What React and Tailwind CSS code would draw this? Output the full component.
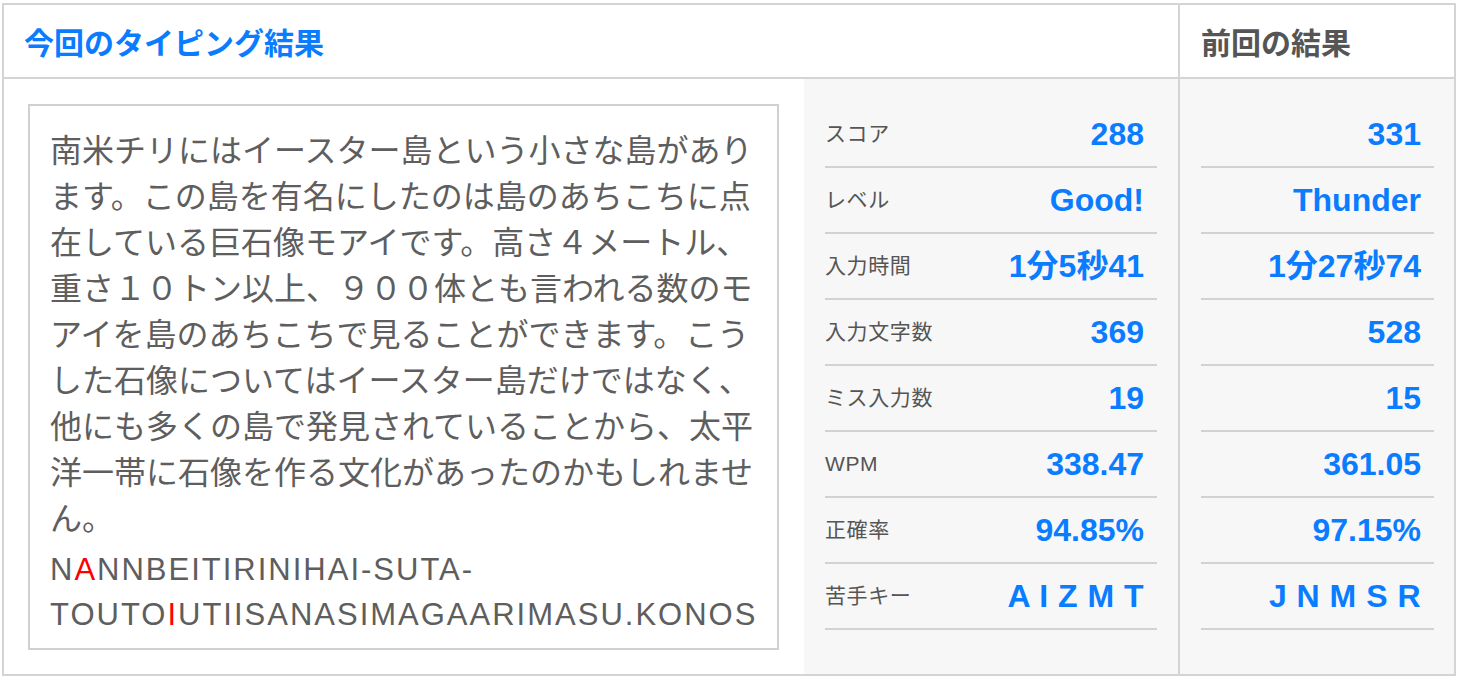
import React from 'react';

const jp = { fontFamily: '"Noto Sans CJK JP", sans-serif' };
const mixed = { fontFamily: '"Liberation Sans", "Noto Sans CJK JP", sans-serif' };

const paragraph = [
  '南米チリにはイースター島という小さな島があり',
  'ます。この島を有名にしたのは島のあちこちに点',
  '在している巨石像モアイです。高さ４メートル、',
  '重さ１０トン以上、９００体とも言われる数のモ',
  'アイを島のあちこちで見ることができます。こう',
  'した石像についてはイースター島だけではなく、',
  '他にも多くの島で発見されていることから、太平',
  '洋一帯に石像を作る文化があったのかもしれませ',
  'ん。',
];

const current = [
  { label: 'スコア', value: '288' },
  { label: 'レベル', value: 'Good!' },
  { label: '入力時間', value: '1分5秒41' },
  { label: '入力文字数', value: '369' },
  { label: 'ミス入力数', value: '19' },
  { label: 'WPM', value: '338.47' },
  { label: '正確率', value: '94.85%' },
  { label: '苦手キー', value: 'A I Z M T', keys: true },
];

const previous = [
  { value: '331' },
  { value: 'Thunder' },
  { value: '1分27秒74' },
  { value: '528' },
  { value: '15' },
  { value: '361.05' },
  { value: '97.15%' },
  { value: 'J N M S R', keys: true },
];

const Value = ({ item }) => (
  <span
    className={`text-[32px] font-bold text-[#0a7cff] leading-none pr-[13px] ${
      item.keys ? 'tracking-[0.5px]' : ''
    }`}
    style={mixed}
  >
    {item.value}
  </span>
);

const App = () => {
  return (
    <div className="bg-white min-h-screen">
      <div className="ml-[2px] mt-[3px] w-[1454px] border-2 border-[#d4d4d4] bg-white">
        {/* header */}
        <div className="flex h-[74px] border-b-2 border-[#d4d4d4]">
          <div className="w-[1176px] border-r-2 border-[#d4d4d4] flex items-center pl-[20px]">
            <h1 className="text-[30px] font-bold text-[#0a7cff] leading-none" style={jp}>
              今回のタイピング結果
            </h1>
          </div>
          <div className="flex-1 flex items-center pl-[21px]">
            <h2 className="text-[30px] font-bold text-[#555555] leading-none" style={jp}>
              前回の結果
            </h2>
          </div>
        </div>

        {/* body */}
        <div className="flex h-[595px]">
          <div className="w-[800px] pt-[25px] pb-[24px] pl-[24px] pr-[25px]">
            <div className="h-full border-2 border-[#d0d0d0] bg-white pt-[19px] px-[20px] overflow-hidden text-[#5e5e5e]">
              <div className="text-[32px] leading-[46px]" style={jp}>
                {paragraph.map((line, i) => (
                  <div key={i} className="whitespace-nowrap">{line}</div>
                ))}
              </div>
              <div
                className="mt-[8px] text-[31px] leading-[45px] tracking-[2px]"
                style={{ fontFamily: '"Liberation Sans", sans-serif' }}
              >
                <div className="whitespace-nowrap">
                  N<span className="text-[#ff0000]">A</span>NNBEITIRINIHAI-SUTA-
                </div>
                <div className="whitespace-nowrap">
                  TOUTO<span className="text-[#ff0000]">I</span>UTIISANASIMAGAARIMASU.KONOS
                </div>
              </div>
            </div>
          </div>

          <div className="w-[376px] bg-[#f7f7f7] border-r-2 border-[#d4d4d4] pt-[23px] pl-[21px] pr-[21px]">
            {current.map((item) => (
              <div
                key={item.label}
                className="h-[66px] border-b-2 border-[#d2d2d2] flex items-center justify-between"
              >
                <span className="text-[21px] tracking-[0.6px] text-[#555555]" style={mixed}>
                  {item.label}
                </span>
                <Value item={item} />
              </div>
            ))}
          </div>

          <div className="flex-1 bg-[#f7f7f7] pt-[23px] pl-[21px] pr-[20px]">
            {previous.map((item, i) => (
              <div
                key={i}
                className="h-[66px] border-b-2 border-[#d2d2d2] flex items-center justify-end"
              >
                <Value item={item} />
              </div>
            ))}
          </div>
        </div>
      </div>
    </div>
  );
};

export default App;
